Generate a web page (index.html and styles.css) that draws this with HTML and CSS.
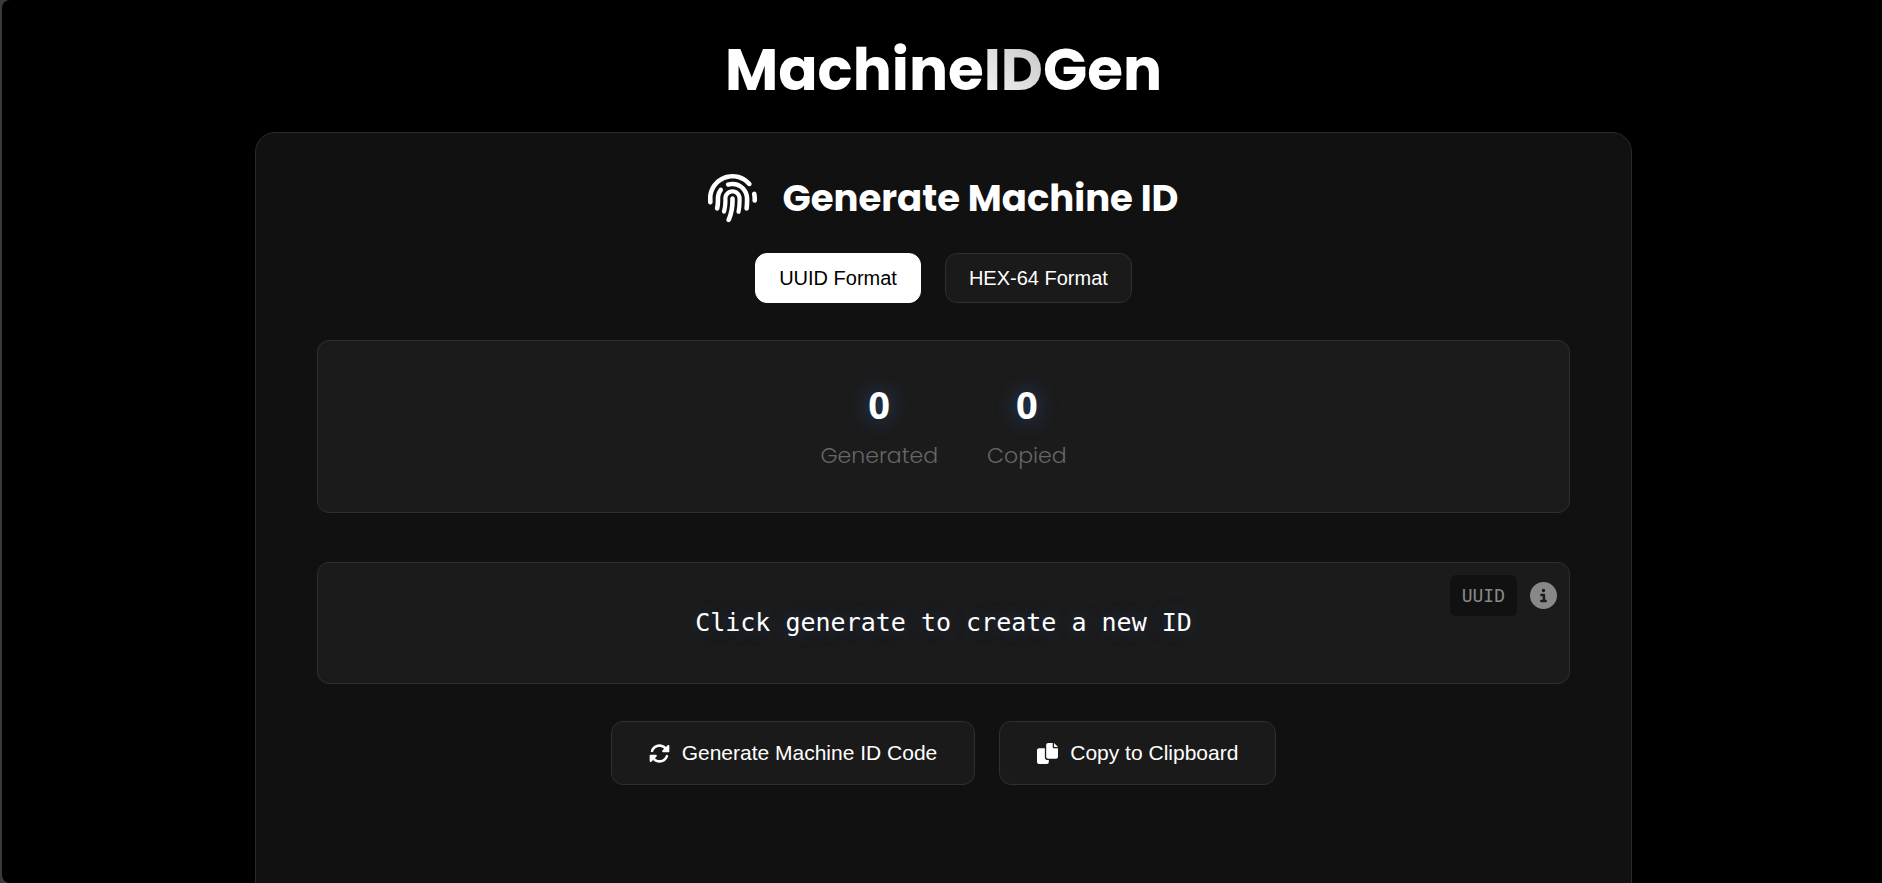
FILE: index.html
```html
<!DOCTYPE html>
<html lang="en">
<head>
<meta charset="utf-8">
<meta name="viewport" content="width=device-width, initial-scale=1">
<title>MachineIDGen</title>
<link rel="stylesheet" href="styles.css">
</head>
<body>
<div class="page">
  <header class="site-header">
    <h1 class="logo">Machine<span class="logo-accent">ID</span>Gen</h1>
  </header>
  <main class="card">
    <h2 class="card-title">
      <svg class="icon-print" viewBox="0 0 512 512" aria-hidden="true"><path d="M48 256C48 141.1 141.1 48 256 48c63.1 0 119.6 28.1 157.8 72.5c8.6 10.1 23.8 11.2 33.8 2.6s11.2-23.8 2.6-33.8C403.3 34.6 333.7 0 256 0C114.6 0 0 114.6 0 256v40c0 13.3 10.7 24 24 24s24-10.7 24-24V256zm458.5-52.9c-2.7-13-15.5-21.3-28.4-18.5s-21.3 15.5-18.5 28.4c2.9 13.9 4.5 28.3 4.5 43.1v20c0 13.3 10.7 24 24 24s24-10.7 24-24V256c0-18.1-1.9-35.8-5.5-52.9zM256 80c-19 0-37.4 3-54.5 8.6c-15.2 5-18.7 23.7-8.3 35.9c7.1 8.3 18.8 10.8 29.4 7.9c10.6-2.9 21.8-4.4 33.4-4.4c70.7 0 128 57.3 128 128v24.9c0 25.2-1.5 50.3-4.4 75.3c-1.7 14.6 9.4 27.8 24.2 27.8c11.8 0 21.9-8.6 23.3-20.3c3.3-27.4 5-55 5-82.7V256c0-97.2-78.8-176-176-176zM150.7 148.7c-9.1-10.6-25.3-11.4-33.9-.4C93.7 178 80 215.4 80 256v24.9c0 24.2-2.6 48.4-7.8 71.9C68.8 368.4 80.1 384 96.1 384c10.5 0 19.9-7 22.2-17.3c6.4-28.1 9.7-56.8 9.7-85.8V256c0-27.2 8.5-52.4 22.9-73.1c7.2-10.4 8-24.6-.2-34.2zM256 160c-53 0-96 43-96 96v24.9c0 35.9-4.6 71.5-13.8 106.1c-3.8 14.3 6.7 29 21.5 29c9.5 0 17.9-6.2 20.4-15.4c10.5-39 15.9-79.2 15.9-119.7V256c0-28.7 23.3-52 52-52s52 23.3 52 52v24.9c0 36.3-3.5 72.4-10.4 107.9c-2.7 13.9 7.7 27.2 21.8 27.2c10.2 0 19-7 21-17c7.7-38.8 11.6-78.3 11.6-118.1V256c0-53-43-96-96-96zm24 96c0-13.3-10.7-24-24-24s-24 10.7-24 24v24.9c0 59.9-11 119.3-32.5 175.2l-5.9 15.3c-4.8 12.4 1.4 26.3 13.8 31s26.3-1.4 31-13.8l5.9-15.3C267.9 411.9 280 346.7 280 280.9V256z"/></svg>
      Generate Machine ID
    </h2>
    <div class="formats">
      <button class="format format-active" type="button">UUID Format</button>
      <button class="format" type="button">HEX-64 Format</button>
    </div>
    <section class="panel stats">
      <div class="stat"><span class="stat-value">0</span><span class="stat-label">Generated</span></div>
      <div class="stat"><span class="stat-value">0</span><span class="stat-label">Copied</span></div>
    </section>
    <section class="panel output">
      <output class="output-text">Click generate to create a new ID</output>
      <div class="output-meta">
        <span class="tag">UUID</span>
        <button class="info" type="button" aria-label="About this format"><svg class="icon-info" viewBox="0 0 512 512" aria-hidden="true"><path d="M256 512A256 256 0 1 0 256 0a256 256 0 1 0 0 512zM216 336h24V272H216c-13.3 0-24-10.7-24-24s10.7-24 24-24h48c13.3 0 24 10.7 24 24v88h8c13.3 0 24 10.7 24 24s-10.7 24-24 24H216c-13.3 0-24-10.7-24-24s10.7-24 24-24zm40-208a32 32 0 1 1 0 64 32 32 0 1 1 0-64z"/></svg></button>
      </div>
    </section>
    <div class="actions">
      <button class="action" type="button"><svg class="icon-action" viewBox="0 0 512 512" aria-hidden="true"><path d="M142.900 142.900c62.200-62.200 162.700-62.500 225.300-1L327 183c-6.900 6.900-8.900 17.200-5.200 26.200s12.500 14.800 22.200 14.800H472c13.300 0 24-10.700 24-24V72c0-9.700-5.800-18.500-14.800-22.200s-19.300-1.700-26.200 5.200L413.400 96.600c-87.600-86.500-228.700-86.200-315.800 1C73.200 122 55.600 150.700 44.800 181.400c-5.900 16.700 2.900 34.900 19.500 40.800s34.900-2.900 40.800-19.500c7.700-21.800 20.200-42.300 37.800-59.800zM16 312V440c0 9.700 5.800 18.500 14.800 22.200s19.300 1.700 26.200-5.200l41.600-41.600c87.600 86.500 228.700 86.200 315.800-1c24.400-24.400 42.100-53.100 52.900-83.700c5.900-16.700-2.900-34.900-19.500-40.800s-34.900 2.900-40.800 19.500c-7.700 21.800-20.200 42.300-37.800 59.800c-62.200 62.200-162.700 62.500-225.300 1L185 329c6.900-6.900 8.900-17.200 5.200-26.200s-12.500-14.800-22.200-14.800H40c-13.300 0-24 10.700-24 24z"/></svg>Generate Machine ID Code</button>
      <button class="action" type="button"><svg class="icon-action" viewBox="0 0 512 512" aria-hidden="true"><path d="M384 96V0H272c-26.500 0-48 21.500-48 48v288c0 26.500 21.500 48 48 48H464c26.500 0 48-21.500 48-48V128h-95.100C398.400 128 384 113.600 384 96zM416 0v96h96L416 0zM192 352V128H48c-26.500 0-48 21.500-48 48v288c0 26.500 21.500 48 48 48h192c26.500 0 48-21.500 48-48V416h-32C220.700 416 192 387.300 192 352z"/></svg>Copy to Clipboard</button>
    </div>
  </main>
</div>
</body>
</html>
```

FILE: styles.css
```css
* {
  box-sizing: border-box;
}

body {
  margin: 0;
  background: #3a3a3a;
  color: #fff;
  font-family: Poppins, Inter, sans-serif;
}

button {
  margin: 0;
  color: inherit;
  font-family: "Liberation Sans", Arial, sans-serif;
  cursor: pointer;
}

svg {
  display: block;
  flex: none;
  fill: currentColor;
}

.page {
  height: 100vh;
  margin-left: 2px;
  padding-left: 3px;
  overflow: hidden;
  border-radius: 8px 0 0 8px;
  background: #000;
}

.site-header {
  padding: 34px 0 26px;
  text-align: center;
}

.logo {
  margin: 0;
  font-size: 58px;
  font-weight: 700;
  line-height: 72px;
}

.logo-accent {
  background: linear-gradient(45deg, #fafafa, #c0c0c0);
  background-clip: text;
  -webkit-background-clip: text;
  color: transparent;
}

.card {
  max-width: 1377px;
  min-height: 100vh;
  margin: 0 auto;
  padding: 40px 61px;
  border: 1px solid #2a2a2a;
  border-radius: 20px;
  background: #111;
}

.card-title {
  display: flex;
  align-items: center;
  justify-content: center;
  gap: 25px;
  margin: 0 0 30px;
  font-size: 37px;
  font-weight: 700;
  line-height: 50px;
}

.icon-print {
  width: 49px;
  height: 49px;
}

.formats,
.actions {
  display: flex;
  flex-wrap: wrap;
  justify-content: center;
  gap: 24px;
}

.format {
  padding: 12px 23px;
  border: 1px solid #2f2f2f;
  border-radius: 12px;
  background: #1a1a1a;
  font-size: 20px;
  line-height: 24px;
}

.format-active {
  border-color: #fff;
  background: #fff;
  color: #000;
}

.panel {
  border: 1px solid #2f2f2f;
  border-radius: 12px;
  background: #1b1b1b;
}

.stats {
  display: flex;
  justify-content: center;
  gap: 49px;
  margin-top: 37px;
  padding: 36px 24px;
}

.stat {
  display: flex;
  flex-direction: column;
  align-items: center;
  gap: 5px;
}

.stat-value {
  font-family: "Open Sans", sans-serif;
  font-size: 38px;
  font-weight: 700;
  line-height: 54px;
  text-shadow: 0 0 20px rgba(59, 130, 246, 0.5);
}

.stat-label {
  color: #666;
  font-size: 22px;
  font-weight: 300;
  line-height: 40px;
}

.output {
  position: relative;
  margin-top: 49px;
  padding: 40px 24px;
  text-align: center;
}

.output-text {
  display: block;
  font-family: Consolas, "DejaVu Sans Mono", monospace;
  font-size: 25px;
  line-height: 40px;
  text-shadow: 0 0 20px rgba(59, 130, 246, 0.3);
}

.output-meta {
  position: absolute;
  top: 12px;
  right: 12px;
  display: flex;
  align-items: center;
  gap: 13px;
  color: #888;
}

.tag {
  padding: 8px 12px;
  border-radius: 6px;
  background: #111;
  font-family: Consolas, "DejaVu Sans Mono", monospace;
  font-size: 18px;
  line-height: 25px;
}

.info {
  padding: 0;
  border: 0;
  background: none;
}

.icon-info {
  width: 27px;
  height: 27px;
}

.actions {
  margin-top: 37px;
}

.action {
  display: flex;
  align-items: center;
  gap: 12px;
  padding: 19px 37px;
  border: 1px solid #2f2f2f;
  border-radius: 12px;
  background: #1a1a1a;
  font-size: 21px;
  line-height: 24px;
}

.icon-action {
  width: 21px;
  height: 21px;
}
```
